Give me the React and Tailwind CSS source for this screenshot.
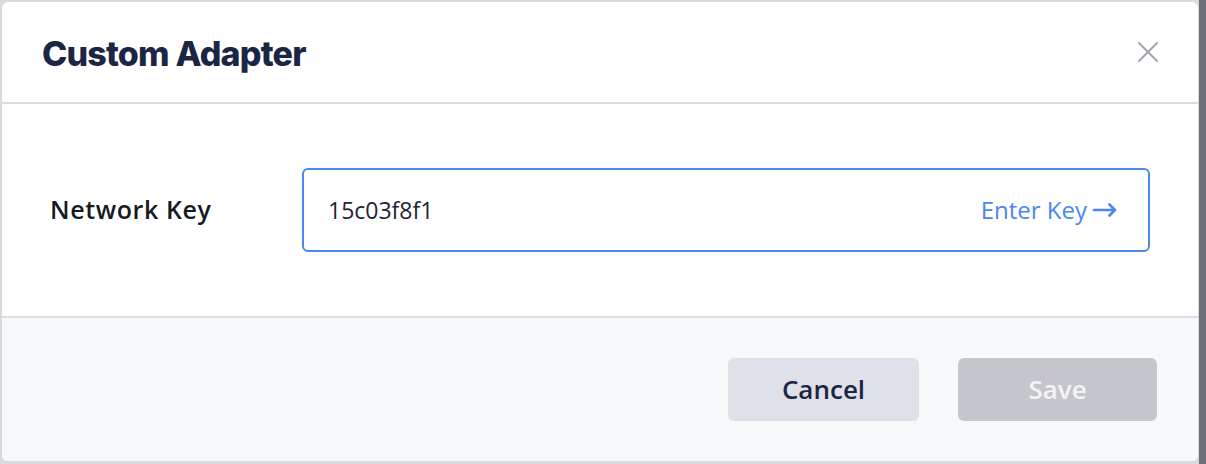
import React, { useState } from 'react'

function CustomAdapterModal() {
  const [networkKey, setNetworkKey] = useState('15c03f8f1');

  return (
    <div className="w-[1206px] h-[464px] flex bg-[#d9dadf] overflow-hidden">
      <div className="mt-[2px] ml-[2px] w-[1196px] h-[459px] rounded-[6px] bg-white overflow-hidden flex flex-col">
        {/* 标题栏 */}
        <div className="h-[102px] shrink-0 flex items-center justify-between pl-[40px] pr-[38px] border-b-2 border-[#dcdde3]">
          <h1 className="pt-[2px] text-[34px] font-extrabold tracking-[-0.8px] text-[#1b2645] font-['Inter','Liberation_Sans',sans-serif]">
            Custom Adapter
          </h1>
          <button className="w-[24px] h-[24px] flex items-center justify-center text-[#a2a6ad]">
            <svg width="22" height="22" viewBox="0 0 22 22" fill="none" stroke="currentColor" strokeWidth="2" strokeLinecap="round">
              <path d="M2 2L20 20M20 2L2 20" />
            </svg>
          </button>
        </div>

        {/* 内容 */}
        <div className="h-[212px] shrink-0 flex items-center pl-[48px] pr-[48px] font-['Open_Sans','Noto_Sans',sans-serif]">
          <label className="w-[252px] text-[25px] font-semibold tracking-[0.6px] text-[#151a24]">Network Key</label>
          <div className="flex-1 h-[84px] flex items-center justify-between border-2 border-[#4a87ee] rounded-[6px] pl-[24px] pr-[30px]">
            <input
              className="flex-1 outline-none bg-transparent text-[23px] text-[#1e2433]"
              value={networkKey}
              onChange={(e) => setNetworkKey(e.target.value)}
            />
            <button className="flex items-center gap-[5px] text-[24px] text-[#4a87ee]">
              Enter Key
              <svg width="26" height="14" viewBox="0 0 26 14" fill="none" stroke="currentColor" strokeWidth="2.6" strokeLinecap="round" strokeLinejoin="round">
                <path d="M2 7H23M17.5 1.5L23 7L17.5 12.5" />
              </svg>
            </button>
          </div>
        </div>

        {/* 底部按钮 */}
        <div className="flex-1 flex items-center justify-end gap-[39px] pr-[41px] bg-[#f7f8fa] border-t-2 border-[#dcdde3] font-['Open_Sans','Noto_Sans',sans-serif]">
          <button className="w-[191px] h-[63px] rounded-[6px] bg-[#dfe1e8] text-[26px] font-semibold text-[#1b2645]">
            Cancel
          </button>
          <button disabled className="w-[199px] h-[63px] rounded-[6px] bg-[#c5c6cb] text-[26px] font-semibold text-[#f3f4f6]">
            Save
          </button>
        </div>
      </div>
      <div className="ml-[1px] flex-1 bg-[#6b6e75]" />
    </div>
  )
}

export default function App() {
  return <CustomAdapterModal />
}
